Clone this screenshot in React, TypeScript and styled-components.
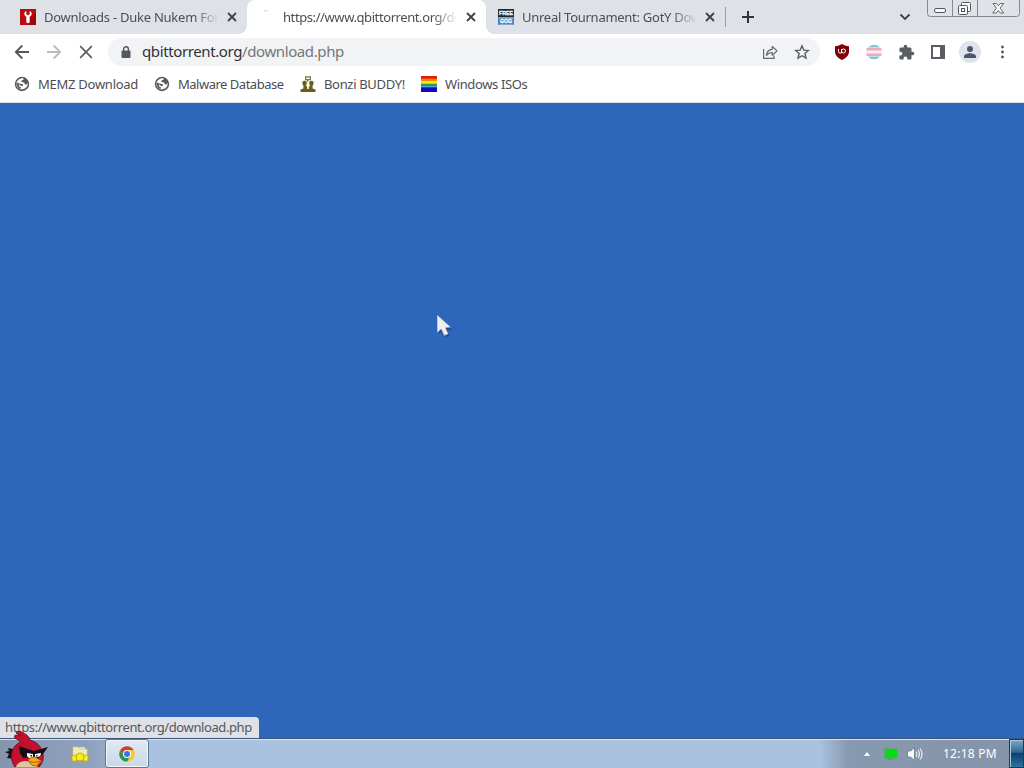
import React from "react";
import { createGlobalStyle, styled } from "styled-components";

export default function App() {
  return (
    <>
      <GlobalStyle />
      <Page>
        <TabStrip>
          <Tab>
            <WrenchIcon />
            <TabTitle $spacing={-0.25}>Downloads - Duke Nukem For</TabTitle>
            <CloseIcon />
          </Tab>
          <Tab $active>
            <LoadingIcon />
            <TabTitle $spacing={-0.41}>https://www.qbittorrent.org/do</TabTitle>
            <CloseIcon />
          </Tab>
          <Tab>
            <FreeGogIcon />
            <TabTitle $spacing={-0.27}>Unreal Tournament: GotY Dow</TabTitle>
            <CloseIcon />
          </Tab>
          <Separator />
          <NewTab>
            <svg width="14" height="14" viewBox="0 0 14 14">
              <path d="M7 1v12M1 7h12" stroke="#303236" strokeWidth="2" />
            </svg>
          </NewTab>
          <TabSearch>
            <svg width="12" height="8" viewBox="0 0 12 8">
              <path d="M1.500 1.500 6 6l4.500-4.500" fill="none" stroke="#3c4043" strokeWidth="1.800" />
            </svg>
          </TabSearch>
          <WindowControls />
        </TabStrip>
        <Toolbar>
          <ToolButton>
            <ArrowIcon color="#54575a" />
          </ToolButton>
          <ToolButton>
            <ArrowIcon color="#b9bbbe" flip />
          </ToolButton>
          <ToolButton>
            <svg width="14" height="14" viewBox="0 0 14 14">
              <path d="m1.200 1.200 11.600 11.600m0-11.600L1.200 12.800" stroke="#5a5d61" strokeWidth="1.700" />
            </svg>
          </ToolButton>
          <Omnibox>
            <LockIcon />
            <Url>
              qbittorrent.org<span>/download.php</span>
            </Url>
            <ShareIcon />
            <StarIcon />
          </Omnibox>
          <ToolButton>
            <ShieldIcon />
          </ToolButton>
          <ToolButton>
            <FlagIcon />
          </ToolButton>
          <ToolButton>
            <PuzzleIcon />
          </ToolButton>
          <ToolButton>
            <svg width="14" height="14" viewBox="0 0 14 14">
              <path fill="#5a5d61" fillRule="evenodd" d="M0 0h14v14H0zM2 2v10h7V2z" />
            </svg>
          </ToolButton>
          <ToolButton>
            <Avatar>
              <svg width="14" height="14" viewBox="0 0 14 14">
                <circle cx="7" cy="4" r="3" fill="#4b5769" />
                <path fill="#4b5769" d="M1 13v-1.600C1 9.200 4.800 8.300 7 8.300s6 .9 6 3.100V13z" />
              </svg>
            </Avatar>
          </ToolButton>
          <ToolButton>
            <svg width="4" height="14" viewBox="0 0 4 14" fill="#54575a">
              <circle cx="2.500" cy="2" r="1.400" />
              <circle cx="2.500" cy="7" r="1.400" />
              <circle cx="2.500" cy="12" r="1.400" />
            </svg>
          </ToolButton>
        </Toolbar>
        <Bookmarks>
          <Bookmark $width={100} $spacing={-0.26}>
            <GlobeIcon />
            <span>MEMZ Download</span>
          </Bookmark>
          <Bookmark $width={106} $spacing={-0.49}>
            <GlobeIcon />
            <span>Malware Database</span>
          </Bookmark>
          <Bookmark $width={81} $spacing={-0.33}>
            <PeopleIcon />
            <span>Bonzi BUDDY!</span>
          </Bookmark>
          <Bookmark $width={83} $spacing={-0.37}>
            <RainbowIcon />
            <span>Windows ISOs</span>
          </Bookmark>
        </Bookmarks>
        <Content>
          <Cursor />
          <Status>https://www.qbittorrent.org/download.php</Status>
        </Content>
        <Taskbar>
          <StartOrb />
          <Pinned>
            <ExplorerIcon />
          </Pinned>
          <TaskButton>
            <ChromeIcon />
          </TaskButton>
          <Tray>
            <svg width="10" height="6" viewBox="0 0 10 6">
              <path d="M5 .5 9 5.300H1z" fill="#fff" stroke="#63738a" strokeWidth=".6" />
            </svg>
            <MonitorIcon />
            <SpeakerIcon />
            <Clock>12:18 PM</Clock>
          </Tray>
          <ShowDesktop />
        </Taskbar>
      </Page>
    </>
  );
}

function CloseIcon() {
  return (
    <svg width="16" height="16" viewBox="0 0 16 16">
      <path d="m4 4 8 8m0-8-8 8" stroke="#3f4246" strokeWidth="1.800" />
    </svg>
  );
}

function WrenchIcon() {
  return (
    <svg width="16" height="16" viewBox="0 0 16 16">
      <path fill="#b90b12" d="M0 0h16v16H0z" />
      <path fill="#960108" d="M9 16V9l7-5v12z" opacity=".7" />
      <path
        fill="#fff"
        d="M6.300 2v3.200L8 6.200l1.700-1V2c1.400.6 2 1.600 1.900 3-.1 1.300-.8 2.200-1.900 2.800V13c0 1.500-3.400 1.500-3.400 0V7.800C5.200 7.200 4.500 6.300 4.400 5c-.1-1.400.5-2.400 1.900-3z"
      />
    </svg>
  );
}

function LoadingIcon() {
  return (
    <svg width="16" height="16" viewBox="0 0 16 16">
      <path d="M5 2q1.500-.4 3.500-.3" fill="none" stroke="#c9cbd0" strokeWidth="1" />
    </svg>
  );
}

function FreeGogIcon() {
  return (
    <svg width="16" height="16" viewBox="0 0 16 16" fontFamily="Liberation Sans, sans-serif">
      <path fill="#20252b" d="M0 0h16v8H0z" />
      <path fill="#4b83ba" d="M0 8h16v8H0z" />
      <path fill="#a9c9e4" d="M1 8.500h14v1H1zM1 15h14v.6H1z" />
      <g fill="#fff" stroke="#fff" strokeWidth=".3" fontWeight="700">
        <text x="1" y="5.800" fontSize="5.500" textLength="14" lengthAdjust="spacingAndGlyphs">
          FREE
        </text>
        <text x="2" y="14" fontSize="5.500" textLength="12" lengthAdjust="spacingAndGlyphs">
          GOG
        </text>
      </g>
    </svg>
  );
}

function WindowControls() {
  return (
    <svg width="93" height="17" viewBox="0 0 93 17" fill="none" stroke="#85898f">
      <path fill="#dfe2e6" d="M.5-.5v14q0 3 3 3h86q3 0 3-3v-14z" />
      <path d="M25.500 0v16.500M50.500 0v16.500" />
      <g stroke="#53575c" fill="#f7f8f9">
        <rect x="7.500" y="8.500" width="11" height="4" rx="1.500" />
        <rect x="34.500" y="2.500" width="9" height="9" rx="1" />
        <rect x="31.500" y="5.500" width="9" height="9" rx="1" />
        <rect x="34.500" y="8.500" width="3" height="3" />
        <path
          strokeWidth=".9"
          d="M66 3.500h3.300l2 2.300 2-2.300h3.300l-3.400 4.700 3.600 4.800h-3.500l-2-2.500-2 2.500h-3.500l3.600-4.800z"
        />
      </g>
    </svg>
  );
}

function ArrowIcon({ color, flip }: { color: string; flip?: boolean }) {
  return (
    <svg width="16" height="16" viewBox="0 0 16 16">
      <path
        transform={flip ? "matrix(-1 0 0 1 16 0)" : undefined}
        d="M15 8H2M8.300 1.500 1.800 8l6.500 6.500"
        fill="none"
        stroke={color}
        strokeWidth="1.800"
      />
    </svg>
  );
}

function LockIcon() {
  return (
    <svg width="10" height="12" viewBox="0 0 10 12">
      <rect x=".5" y="4.500" width="9" height="7.500" rx="1" fill="#54575b" />
      <path d="M2.600 5V3.200a2.400 2.400 0 0 1 4.800 0V5" fill="none" stroke="#54575b" strokeWidth="1.400" />
    </svg>
  );
}

function ShareIcon() {
  return (
    <svg width="16" height="16" viewBox="0 0 16 16" fill="none" stroke="#64676b" strokeWidth="1.200">
      <path d="M1.600 5v9.400H12V11.500" />
      <path d="M4.500 11.500c.3-4 2.400-6 5.700-6.200V2.500l4.900 4.400-4.900 4.300V8.500c-2.700 0-4.300.9-5.700 3z" strokeLinejoin="round" />
    </svg>
  );
}

function StarIcon() {
  return (
    <svg width="16" height="16" viewBox="0 0 16 16">
      <path
        d="m8 1.800 1.800 4.300 4.600.4-3.500 3 1.100 4.600L8 11.700l-4 2.400 1.100-4.600-3.500-3 4.600-.4z"
        fill="none"
        stroke="#5a5d61"
        strokeWidth="1.400"
      />
    </svg>
  );
}

function ShieldIcon() {
  return (
    <svg width="16" height="16" viewBox="0 0 16 16">
      <path d="M8 0c2 1.300 4.200 2 7 2.200v5.300c0 4-3 6.700-7 8.500-4-1.800-7-4.500-7-8.500V2.200C3.800 2 6 1.300 8 0z" fill="#800008" />
      <path d="M4.500 5v2.500q0 1.500 1.500 1.500h1.500V5" fill="none" stroke="#fff" />
      <circle cx="9.500" cy="7" r="2" fill="none" stroke="#fff" />
    </svg>
  );
}

function FlagIcon() {
  return (
    <svg width="16" height="16" viewBox="0 0 16 16">
      <path fill="#7fc3d5" d="M2 3.500a7.800 7.800 0 0 1 12 0z" />
      <path fill="#eda9b9" d="M.5 4h15v3H.5zM.5 9h15v3H.5z" />
      <path fill="#f7eff3" d="M0 6.500h16v3H0z" />
      <path fill="#7fc3d5" d="M2 12.500a7.800 7.800 0 0 0 12 0z" />
    </svg>
  );
}

function PuzzleIcon() {
  return (
    <svg width="17" height="17" viewBox="0 0 24 24">
      <path
        fill="#5a5d61"
        d="M20.500 11H19V7c0-1.100-.9-2-2-2h-4V3.500a2.500 2.500 0 0 0-5 0V5H4c-1.100 0-2 .9-2 2v3.800h1.500a2.700 2.700 0 0 1 0 5.400H2V20c0 1.100.9 2 2 2h3.800v-1.500a2.700 2.700 0 0 1 5.400 0V22H17c1.100 0 2-.9 2-2v-4h1.500a2.500 2.500 0 0 0 0-5z"
      />
    </svg>
  );
}

function GlobeIcon() {
  return (
    <svg width="16" height="16" viewBox="0 0 16 16">
      <circle cx="8" cy="8" r="7.200" fill="#56595d" />
      <path
        fill="#fff"
        d="M9.600 2.400c.4 1.400-.6 1.600-1.900 1.900-.5.900-.2 1.700.6 1.900l2 .2.300 1.500 1.500.8 1.500-1.600c.5 3-1.600 5.600-4.300 6l.3-1.800-1.600-.5-.7-1.700-3.100-1.100-1.600-1.300-.1 1.200c.1 2.200 1.700 4.300 4 5l.4-1.700-1.700-.6-.6-2.100 2.600.7 1.100 1.700 1.300.4-.4 2C5.800 14 2.100 11.500 2.200 8c.5-3.300 3.500-6.200 7.400-5.600z"
      />
      <path fill="#56595d" d="M3.300 6.600 6 7.700l2.200.2 1 1.200-.7 1-2-.3-1-1.200-2.400-.3z" />
    </svg>
  );
}

function PeopleIcon() {
  return (
    <svg width="16" height="16" viewBox="0 0 16 16">
      <path fill="none" stroke="#7b773e" strokeWidth="1.200" d="M5.600.8h4.800v2.800H8.700L7.500 5V3.600H5.600z" />
      <path
        fill="#67601a"
        d="M4.600 4.800c1.700 0 2.300 1.200 2.200 2.600-.1 1-.5 1.700-1 2.200L7.200 11v2h1.600v-2l1.400-1.400c-.5-.5-.9-1.200-1-2.200-.1-1.400.5-2.600 2.200-2.600s2.300 1.200 2.200 2.600c-.1 1-.5 1.700-1 2.200v2.800l2.900 1.200V16H.5v-2.400l2.900-1.200V9.600c-.5-.5-.9-1.200-1-2.200-.1-1.400.5-2.600 2.200-2.600z"
      />
    </svg>
  );
}

function RainbowIcon() {
  return (
    <svg width="16" height="16" viewBox="0 0 16 16">
      <path fill="#e61b0b" d="M0 0h16v3H0z" />
      <path fill="#f78a08" d="M0 2.700h16v2.600H0z" />
      <path fill="#f7e80c" d="M0 5.200h16v2.600H0z" />
      <path fill="#2e9b4c" d="M0 7.700h16v2.500H0z" />
      <path fill="#48a9df" d="M0 10h16v1.200H0z" />
      <path fill="#1807b9" d="M0 11.200h16V16H0z" />
    </svg>
  );
}

function Cursor() {
  return (
    <CursorSvg width="18" height="26" viewBox="0 0 18 26">
      <path d="M3 3v17l4-3 3 6 3.500-1-2-6h5z" fill="#173a77" opacity=".6" />
      <path d="M1.500 1.500V18l3.800-3.300 3.200 6.600 3.500-1.500-3-6.300 5.200-.4z" fill="#f2eeee" stroke="#d6d5dc" strokeWidth=".6" />
    </CursorSvg>
  );
}

function StartOrb() {
  return (
    <OrbSlot>
      <BirdSvg width="46" height="36" viewBox="0 0 46 36">
        <path d="m9 18-5-1 1 3-4 1 4 2-2 4 7 1z" fill="#191218" />
        <path
          d="M11 36C6 29 6 20 12 14q2-2 5-3L11 7q-2-3 2-3l4 1-5-3q1-3 5-1c5 2 8 4 9 8 7 2 12 7 13 14 1 5-1 10-4 13z"
          fill="#c5102d"
          stroke="#56101b"
          strokeWidth=".8"
        />
        <path d="M12 36c1-4 5-6 10-6l12 3-1 3z" fill="#dfc5a4" />
        <path d="m15 15 15 5 14-4-5 7-5 4-7-1-8 1-3-5z" fill="#140e12" />
        <path d="m23 22 6 1v4q-4 1-6-2zm8 1 6-1q0 4-4 4l-2 1z" fill="#fff" />
        <path d="M26.500 24H28v1.500h-1.500zm5.500 0h1.500v1.500H32z" fill="#2b1719" />
        <path d="M24 29q4-4 7-3l7 4-6 5q-5 0-6-3z" fill="#f5a81c" stroke="#8f4d10" strokeWidth=".7" />
        <path d="M26 31q5 1 11-1" fill="none" stroke="#8f4d10" strokeWidth=".8" />
      </BirdSvg>
    </OrbSlot>
  );
}

function ExplorerIcon() {
  return (
    <svg width="18" height="18" viewBox="0 0 18 18">
      <path d="M2 2h5l2 2h7v10H2z" fill="#f6ecaa" stroke="#d4c679" strokeWidth=".7" />
      <path d="M8 2h6v3H8z" fill="#c9dce0" />
      <path d="M1 11q3-2 5 0v5H1zM12 11q3-2 5 0v5h-5z" fill="#f7ed20" stroke="#bbab1c" strokeWidth=".7" />
      <circle cx="9" cy="12" r="4" fill="#f7ed20" stroke="#b19c12" strokeWidth=".8" />
    </svg>
  );
}

function ChromeIcon() {
  return (
    <svg width="16" height="16" viewBox="0 0 16 16">
      <path d="M1.250 4.100A7.800 7.800 0 0 1 14.750 4.100H8A3.900 3.900 0 0 0 4.620 9.950z" fill="#dd3b2d" />
      <path d="M14.750 4.100A7.800 7.800 0 0 1 8 15.800l3.380-5.850A3.900 3.900 0 0 0 8 4.100z" fill="#f8ca22" />
      <path d="M8 15.800A7.800 7.800 0 0 1 1.250 4.100l3.370 5.850a3.900 3.900 0 0 0 6.760 0z" fill="#27964a" />
      <circle cx="8" cy="8" r="3.900" fill="#fff" />
      <circle cx="8" cy="8" r="3" fill="#3277dc" />
    </svg>
  );
}

function MonitorIcon() {
  return (
    <svg width="16" height="14" viewBox="0 0 16 14">
      <path fill="#788c85" d="M5 11h6v2H5z" />
      <rect x="1.500" y="1.500" width="13" height="10" fill="#08db12" stroke="#6ba37c" />
    </svg>
  );
}

function SpeakerIcon() {
  return (
    <svg width="16" height="14" viewBox="0 0 16 14">
      <path d="M.5 4h3L7.500.5v13L3.500 10h-3z" fill="#f7f9fb" stroke="#5d6d80" strokeWidth=".7" />
      <path d="M9 4.500q1.800 2.500 0 5M11 3q3 4 0 8M13 1.500q4.200 5.500 0 11" fill="none" stroke="#f1f5fa" strokeWidth="1.100" />
    </svg>
  );
}

const GlobalStyle = createGlobalStyle`
  body {
    margin: 0;
    overflow: hidden;
    font-family: "Noto Sans", "Open Sans", sans-serif;
  }

  svg {
    display: block;
    flex: none;
  }
`;

const Page = styled.div`
  width: 1024px;
  height: 768px;
  display: flex;
  flex-direction: column;
  overflow: hidden;
`;

const TabStrip = styled.header`
  flex: none;
  height: 34px;
  display: flex;
  padding: 0 4px 0 8px;
  background: #dee1e6;
`;

const Tab = styled.div<{ $active?: boolean }>`
  position: relative;
  box-sizing: border-box;
  width: 239px;
  display: flex;
  align-items: center;
  padding: 0 7px 0 12px;
  color: #4b4e52;
  background: ${({ $active }) => ($active ? "#fff" : "transparent")};
  border-radius: 8px 8px 0 0;

  /* the feet that curve out of the selected tab */
  &::before,
  &::after {
    content: ${({ $active }) => ($active ? '""' : "none")};
    position: absolute;
    bottom: 0;
    width: 8px;
    height: 8px;
  }

  &::before {
    left: -8px;
    background: radial-gradient(circle at 0 0, #dee1e6 7.5px, #fff 8px);
  }

  &::after {
    right: -8px;
    background: radial-gradient(circle at 100% 0, #dee1e6 7.5px, #fff 8px);
  }
`;

const TabTitle = styled.span<{ $spacing: number }>`
  width: 173px;
  margin: 0 7px 0 8px;
  white-space: nowrap;
  font-size: 13px;
  line-height: 20px;
  letter-spacing: ${({ $spacing }) => $spacing}px;
  mask-image: linear-gradient(to right, #000 150px, transparent 175px);
`;

const Separator = styled.div`
  width: 1px;
  height: 20px;
  margin-top: 7px;
  background: #9a9da2;
`;

const NewTab = styled.div`
  margin: 10px auto 0 15px;
`;

const TabSearch = styled.div`
  margin: 13px 16px 0 0;
`;

const Toolbar = styled.div`
  flex: none;
  height: 36px;
  display: flex;
  align-items: center;
  padding: 0 6px;
  background: #fff;
`;

const ToolButton = styled.div`
  width: 32px;
  height: 32px;
  display: flex;
  align-items: center;
  justify-content: center;
`;

const Omnibox = styled.div`
  box-sizing: border-box;
  width: 712px;
  height: 28px;
  margin: 0 6px;
  padding: 0 10px 0 13px;
  display: flex;
  align-items: center;
  gap: 16px;
  border-radius: 14px;
  background: #f1f3f4;
`;

const Url = styled.div`
  flex: 1;
  margin: 0 0 2px -10px;
  padding-left: 5px;
  color: #303236;
  font-size: 15px;
  letter-spacing: -0.39px;
  line-height: 22px;

  span {
    color: #74777b;
  }
`;

const Avatar = styled.div`
  width: 22px;
  height: 22px;
  display: flex;
  align-items: center;
  justify-content: center;
  border-radius: 50%;
  background: #dfe3ea;
`;

const Bookmarks = styled.nav`
  flex: none;
  box-sizing: border-box;
  height: 33px;
  display: flex;
  gap: 16px;
  padding: 6px 14px 0;
  background: #fff;
  border-bottom: 1px solid #dfe3ea;
`;

const Bookmark = styled.div<{ $width: number; $spacing: number }>`
  height: 16px;
  display: flex;
  gap: 8px;
  color: #4b4e52;
  font-size: 13px;
  line-height: 17px;

  span {
    width: ${({ $width }) => $width}px;
    white-space: nowrap;
    letter-spacing: ${({ $spacing }) => $spacing}px;
  }
`;

const Content = styled.main`
  flex: 1;
  position: relative;
  display: flex;
  align-items: flex-end;
  background: #2e67b9;
`;

const CursorSvg = styled.svg`
  position: absolute;
  left: 436px;
  top: 211px;
`;

const Status = styled.div`
  box-sizing: border-box;
  width: 259px;
  height: 21px;
  padding-left: 5px;
  color: #55585c;
  background: #dee1e6;
  border-radius: 0 4px 0 0;
  font-size: 13px;
  line-height: 20px;
  letter-spacing: -0.4px;
  white-space: nowrap;
`;

const Taskbar = styled.footer`
  flex: none;
  box-sizing: border-box;
  height: 30px;
  display: flex;
  border-top: 1px solid #3d5675;
  box-shadow: inset 0 1px #d6e3f0;
  background: linear-gradient(to right, #8595ad, #8fa2bd 90px, #a9c2df 150px, #a9c2df 820px, #8799b0 848px, #8494a9);
`;

const OrbSlot = styled.div`
  position: relative;
  width: 54px;
`;

const BirdSvg = styled.svg`
  position: absolute;
  left: 4px;
  top: -8px;
`;

const Pinned = styled.div`
  width: 51px;
  display: flex;
  align-items: center;
  justify-content: center;
`;

const TaskButton = styled.div`
  box-sizing: border-box;
  width: 44px;
  height: 29px;
  display: flex;
  align-items: center;
  justify-content: center;
  border: 1px solid #64758b;
  border-radius: 3px;
  box-shadow: inset 0 0 0 1px #f3f7fb;
  background: linear-gradient(#e0e9f3, #c9d8e9);
`;

const Tray = styled.div`
  flex: 1;
  display: flex;
  align-items: center;
  justify-content: flex-end;
  gap: 8px;

  > svg:first-child {
    margin-right: 3px;
  }
`;

const Clock = styled.div`
  width: 54px;
  margin: 0 12px;
  color: #fff;
  font-size: 12px;
  line-height: 20px;
  letter-spacing: 0.25px;
  white-space: nowrap;
`;

const ShowDesktop = styled.div`
  box-sizing: border-box;
  width: 15px;
  border: 1px solid #183b5e;
  box-shadow: inset 1px 1px #a7cbe1;
  background: linear-gradient(#7da7c8, #336991 45%, #0b406e 50%, #2f739b);
`;
